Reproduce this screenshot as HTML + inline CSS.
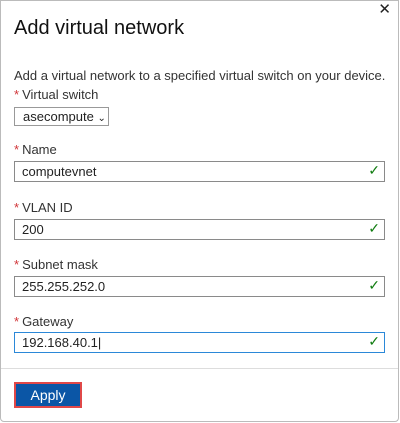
<!DOCTYPE html>
<html><head><style>
*{box-sizing:border-box;margin:0;padding:0}
body{width:400px;height:423px;background:#fff;font-family:"Liberation Sans",sans-serif;color:#222;position:relative;overflow:hidden}
.frame{position:absolute;left:0;top:0;width:399px;height:422px;border:1px solid #bbb;border-radius:0 0 4px 4px}
.abs{position:absolute}
.t{left:14px;top:17px;font-size:20px;color:#111}
.x{right:9px;top:0px;font-size:15px;color:#222}
.d{left:14px;top:68px;font-size:13px;color:#333}
.lbl{left:14px;font-size:13px;color:#333}
.lbl b{color:#d13438;font-weight:normal;margin-right:3px}
.in{left:14px;width:371px;height:21px;border:1px solid #8a8a8a;font-size:13px;padding:2px 0 0 7px;color:#222}
.ck{position:absolute;right:4px;top:0px;color:#107c10;font-size:14px}
.sel{left:14px;top:107px;width:95px;height:19px;border:1px solid #999;font-size:13px;padding:1px 0 0 8px}
.sep{left:1px;top:368px;width:397px;height:1px;background:#ddd}
.btn{left:14px;top:382px;width:68px;height:26px;background:#0b56a6;border:2px solid #e04848;color:#fff;font-size:14px;text-align:center;line-height:22px}
</style></head><body>
<div class="frame"></div>
<div class="abs x">✕</div>
<div class="abs t">Add virtual network</div>
<div class="abs d">Add a virtual network to a specified virtual switch on your device.</div>
<div class="abs lbl" style="top:87px"><b>*</b>Virtual switch</div>
<div class="abs sel">asecompute <span style="font-size:10px">&#8964;</span></div>
<div class="abs lbl" style="top:142px"><b>*</b>Name</div>
<div class="abs in" style="top:161px">computevnet<span class="ck">✓</span></div>
<div class="abs lbl" style="top:200px"><b>*</b>VLAN ID</div>
<div class="abs in" style="top:219px">200<span class="ck">✓</span></div>
<div class="abs lbl" style="top:257px"><b>*</b>Subnet mask</div>
<div class="abs in" style="top:276px">255.255.252.0<span class="ck">✓</span></div>
<div class="abs lbl" style="top:314px"><b>*</b>Gateway</div>
<div class="abs in" style="top:332px;border-color:#2b88d8">192.168.40.1|<span class="ck">✓</span></div>
<div class="abs sep"></div>
<div class="abs btn">Apply</div>
</body></html>
